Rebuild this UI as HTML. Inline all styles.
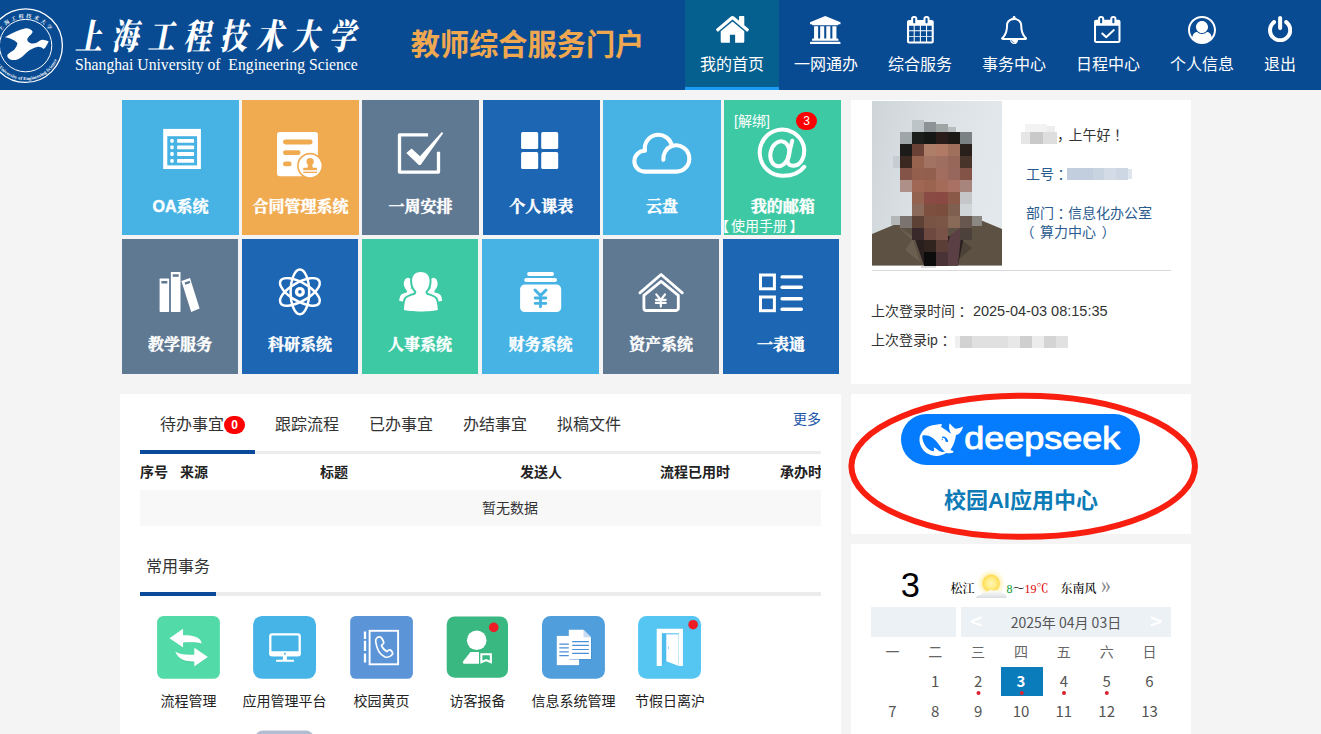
<!DOCTYPE html>
<html lang="zh-CN">
<head>
<meta charset="utf-8">
<title>教师综合服务门户</title>
<style>
*{margin:0;padding:0;box-sizing:border-box}
html,body{width:1321px;height:734px;overflow:hidden}
body{background:#f4f4f4;font-family:"Liberation Sans","Noto Sans CJK SC",sans-serif;font-size:14px;color:#333;position:relative}
.ab{position:absolute;display:block}
.t{position:absolute;white-space:nowrap;line-height:20px}
#hd{position:absolute;left:0;top:0;width:1321px;height:90px;background:#084b93;overflow:hidden}
.nav{position:absolute;top:0;height:90px;width:94px}
.nav.on{background:#06608f;border-bottom:3px solid #1b9cf2}
.nav span{position:absolute;left:0;right:0;top:54px;line-height:22px;font-size:16px;color:#fff;text-align:center}
.tile{position:absolute;color:#fff}
.tile .lb{position:absolute;left:0;right:0;text-align:center;font-family:"Liberation Sans","Noto Serif CJK SC",serif;font-weight:700;-webkit-text-stroke:.45px #fff;font-size:16px;line-height:20px;white-space:nowrap}
.r1{top:100px;height:134.67px;width:117.4px}
.r2{top:239.2px;height:134.5px;width:116px}
.r1 .lb{top:96.500px}
.r2 .lb{top:96px}
.c-lb{background:#47b3e4}.c-or{background:#f0aa50}.c-sl{background:#5f7993}.c-db{background:#1c66b4}.c-gr{background:#3ec9a5}
.panel{position:absolute;background:#fff}
.badge{position:absolute;background:#f00;color:#fff;border-radius:10px;width:21px;height:18px;font-size:12px;line-height:18px;text-align:center}
.tab{font-size:16px;line-height:22px;color:#333}
.th{font-size:14px;font-weight:bold;line-height:20px;color:#222}
.sv{width:63px;height:63px;border-radius:9px}
.sl{width:100px;text-align:center;font-size:14px;line-height:20px;color:#222}
.wz{font-family:"Liberation Serif","Noto Serif CJK SC",serif;font-size:12px;line-height:18px;color:#000;font-weight:500}
.cn{font-family:"Noto Sans CJK SC","Liberation Sans",sans-serif}
.cal .cr{display:flex;height:30px}
.cal .cr i{font-style:normal;display:block;width:42.857px;text-align:center;line-height:30px;font-size:15px;color:#555;font-family:"Noto Sans CJK SC","Liberation Sans",sans-serif}
.cal .wk i{font-size:14px;color:#666}
.p{position:relative;left:3.500px}

</style>
</head>
<body>
<div id="hd">
<svg class="ab" style="left:-14px;top:6px" width="80" height="80" viewBox="-14 6 80 80">
<defs>
<path id="arcT" d="M -3.6 45.6 A 29.3 29.3 0 0 1 54.9 45.6"/>
<path id="arcB" d="M -8.9 45.6 A 34.5 34.5 0 0 0 60.1 45.6"/>
</defs>
<circle cx="25.6" cy="45.6" r="36.8" fill="none" stroke="#fff" stroke-width="1.3"/>
<circle cx="25.6" cy="45.6" r="26.2" fill="none" stroke="#fff" stroke-width="1"/>
<path fill="#fff" d="M4.9 37.2 C12 33 19 29.5 25 28.4 C28.5 28 31.5 29.5 32.7 31.7 C31.5 35 27.5 36.5 27.2 39.9 C28.5 43.5 33 44 36 43.1 C39 41.5 41 39.5 43.6 39.9 C45.5 40 47.5 40.5 48.7 41.5 C47 44.5 46 47.5 43.6 49.1 C41.5 47.5 39.5 46.5 37.1 47 C33.5 48 30 49.5 27.2 51.9 C24 55 21 58 17.4 59.5 C14 60.5 10.5 60 8.7 58.4 C7 57 7 55.8 7.6 54.6 C9.5 52.5 12 51.5 14.2 49.7 C16 47.8 17.2 45.5 17.4 43.1 C14.5 39.5 9.5 38 4.9 37.2Z"/>
<text font-family="'Liberation Serif','Noto Serif CJK SC',serif" font-size="5.2" font-weight="bold" fill="#fff" letter-spacing="2.2"><textPath href="#arcT" startOffset="17%">上海工程技术大学</textPath></text>
<text font-family="'Liberation Serif',serif" font-size="4.6" font-weight="bold" fill="#fff" letter-spacing="0.1"><textPath href="#arcB" startOffset="3%">Shanghai University of Engineering Science</textPath></text>
</svg>
<div class="t" id="cnname" style="left:75px;top:14.900px;transform:scale(1,1.3);transform-origin:50% 50%;font-family:'Liberation Serif','Noto Serif CJK SC',serif;font-weight:900;font-style:italic;font-size:27px;line-height:44px;letter-spacing:9.200px;color:#fff">上海工程技术大学</div>
<div class="t" id="enname" style="left:75px;top:53.600px;font-family:'Liberation Serif',serif;font-size:15.700px;line-height:22px;color:#fff">Shanghai University of&nbsp; Engineering Science</div>
<div class="t" id="portal" style="left:410.800px;top:25.300px;font-weight:bold;font-size:29.200px;line-height:40px;color:#f0a850">教师综合服务门户</div>

<div class="nav on" style="left:685px"><span>我的首页</span></div>
<div class="nav" style="left:779px"><span>一网通办</span></div>
<div class="nav" style="left:873px"><span>综合服务</span></div>
<div class="nav" style="left:967px"><span>事务中心</span></div>
<div class="nav" style="left:1061px"><span>日程中心</span></div>
<div class="nav" style="left:1155px"><span>个人信息</span></div>
<div class="nav" style="left:1249px;width:62px"><span>退出</span></div>
<svg class="ab" style="left:715.75px;top:16.25px" width="33" height="26.75" viewBox="0 0 1612 1283" preserveAspectRatio="none"><path fill="#fff" d="M1382.1 739.2C1382.1 737.2 1382.1 735.2 1381.1 733.2L806.1 259.2L231.1 733.2C231.1 735.2 230.1 737.2 230.1 739.2V1219.2C230.1 1254.2 259.1 1283.2 294.1 1283.2H678.1V899.2H934.1V1283.2H1318.1C1353.1 1283.2 1382.1 1254.2 1382.1 1219.2ZM1605.1 670.2C1616.1 657.2 1614.1 636.2 1601.1 625.2L1382.1 443.2V35.2C1382.1 17.2 1368.1 3.2 1350.1 3.2H1158.1C1140.1 3.2 1126.1 17.2 1126.1 35.2V230.2L882.1 26.2C840.1 -8.8 772.1 -8.8 730.1 26.2L11.1 625.2C-1.9 636.2 -3.9 657.2 7.1 670.2L69.1 744.2C74.1 750.2 82.1 754.2 90.1 755.2C99.1 756.2 107.1 753.2 114.1 748.2L806.1 171.2L1498.1 748.2C1504.1 753.2 1511.1 755.2 1519.1 755.2C1520.1 755.2 1521.1 755.2 1522.1 755.2C1530.1 754.2 1538.1 750.2 1543.1 744.2L1605.1 670.2Z"/></svg>
<svg class="ab" style="left:810px;top:15.5px" width="30.5" height="28.75" viewBox="0 0 1920 1792" preserveAspectRatio="none"><path fill="#fff" d="M960 0 0 384V512H128C128 547 159 576 197 576H1723C1761 576 1792 547 1792 512H1920V384ZM256 640V1408H197C159 1408 128 1437 128 1472V1536H1792V1472C1792 1437 1761 1408 1723 1408H1664V640H1408V1408H1280V640H1024V1408H896V640H640V1408H512V640ZM1851 1600H69C31 1600 0 1629 0 1664V1792H1920V1664C1920 1629 1889 1600 1851 1600Z"/></svg>
<svg class="ab" style="left:907px;top:16.25px" width="26.75" height="27.5" viewBox="0 0 1664 1792" preserveAspectRatio="none"><path fill="#fff" d="M128 1664V1376H416V1664ZM480 1664V1376H800V1664ZM128 1312V992H416V1312ZM480 1312V992H800V1312ZM128 928V640H416V928ZM864 1664V1376H1184V1664ZM480 928V640H800V928ZM1248 1664V1376H1536V1664ZM864 1312V992H1184V1312ZM512 448C512 465 497 480 480 480H416C399 480 384 465 384 448V160C384 143 399 128 416 128H480C497 128 512 143 512 160V448ZM1248 1312V992H1536V1312ZM864 928V640H1184V928ZM1248 928V640H1536V928ZM1280 448C1280 465 1265 480 1248 480H1184C1167 480 1152 465 1152 448V160C1152 143 1167 128 1184 128H1248C1265 128 1280 143 1280 160V448ZM1664 384C1664 314 1606 256 1536 256H1408V160C1408 72 1336 0 1248 0H1184C1096 0 1024 72 1024 160V256H640V160C640 72 568 0 480 0H416C328 0 256 72 256 160V256H128C58 256 0 314 0 384V1664C0 1734 58 1792 128 1792H1536C1606 1792 1664 1734 1664 1664Z"/></svg>
<svg class="ab" style="left:1001px;top:15.75px" width="26.25" height="28" viewBox="0 0 1664 1792" preserveAspectRatio="none"><path fill="#fff" d="M848 1696C848 1705 841 1712 832 1712C735 1712 656 1633 656 1536C656 1527 663 1520 672 1520C681 1520 688 1527 688 1536C688 1615 753 1680 832 1680C841 1680 848 1687 848 1696ZM182 1408C361 1206 448 932 448 576C448 447 570 256 832 256C1094 256 1216 447 1216 576C1216 932 1303 1206 1482 1408ZM1664 1408C1516 1283 1344 1059 1344 576C1344 384 1185 174 920 135C925 123 928 110 928 96C928 43 885 0 832 0C779 0 736 43 736 96C736 110 739 123 744 135C479 174 320 384 320 576C320 1059 148 1283 0 1408C0 1478 58 1536 128 1536H576C576 1677 691 1792 832 1792C973 1792 1088 1677 1088 1536H1536C1606 1536 1664 1478 1664 1408Z"/></svg>
<svg class="ab" style="left:1094px;top:16.25px" width="26.5" height="27" viewBox="0 0 1664 1792" preserveAspectRatio="none"><path fill="#fff" d="M1303 964C1315 951 1315 931 1303 919L1257 873C1245 861 1225 861 1212 873L768 1317L548 1097C535 1085 515 1085 503 1097L457 1143C445 1155 445 1175 457 1188L745 1476C758 1488 778 1488 791 1476L1303 964ZM128 1664V640H1536V1664ZM512 448C512 466 498 480 480 480H416C398 480 384 466 384 448V160C384 142 398 128 416 128H480C498 128 512 142 512 160V448ZM1280 448C1280 466 1266 480 1248 480H1184C1166 480 1152 466 1152 448V160C1152 142 1166 128 1184 128H1248C1266 128 1280 142 1280 160V448ZM1664 384C1664 314 1606 256 1536 256H1408V160C1408 72 1336 0 1248 0H1184C1096 0 1024 72 1024 160V256H640V160C640 72 568 0 480 0H416C328 0 256 72 256 160V256H128C58 256 0 314 0 384V1664C0 1734 58 1792 128 1792H1536C1606 1792 1664 1734 1664 1664Z"/></svg>
<svg class="ab" style="left:1188px;top:15.75px" width="28" height="28" viewBox="0 0 1792 1792" preserveAspectRatio="none"><path fill="#fff" d="M896 0C401 0 0 401 0 896C0 1389 400 1792 896 1792C1393 1792 1792 1388 1792 896C1792 401 1391 0 896 0ZM1515 1351C1479 1172 1392 1024 1209 1024C1128 1103 1018 1152 896 1152C774 1152 664 1103 583 1024C400 1024 313 1172 277 1351C184 1223 128 1066 128 896C128 473 473 128 896 128C1319 128 1664 473 1664 896C1664 1066 1608 1223 1515 1351ZM1280 704C1280 916 1108 1088 896 1088C684 1088 512 916 512 704C512 492 684 320 896 320C1108 320 1280 492 1280 704Z"/></svg>
<svg class="ab" style="left:1268px;top:15.75px" width="24.25" height="26.25" viewBox="0 0 1536 1664" preserveAspectRatio="none"><path fill="#fff" d="M1536 896C1536 653 1424 429 1229 283C1173 240 1092 251 1050 308C1007 364 1019 445 1075 487C1205 585 1280 734 1280 896C1280 1178 1050 1408 768 1408C486 1408 256 1178 256 896C256 734 331 585 461 487C517 445 529 364 486 308C444 251 364 240 307 283C112 429 0 653 0 896C0 1319 345 1664 768 1664C1191 1664 1536 1319 1536 896ZM896 128C896 58 838 0 768 0C698 0 640 58 640 128V768C640 838 698 896 768 896C838 896 896 838 896 768Z"/></svg>
</div>

<div class="tile r1 c-lb" style="left:122px;width:117.200px"><div class="lb">OA系统</div></div>
<div class="tile r1 c-or" style="left:242px;width:116.800px"><div class="lb">合同管理系统</div></div>
<div class="tile r1 c-sl" style="left:362px;width:117px"><div class="lb">一周安排</div></div>
<div class="tile r1 c-db" style="left:483px;width:116.700px"><div class="lb">个人课表</div></div>
<div class="tile r1 c-lb" style="left:603.300px;width:117.500px"><div class="lb">云盘</div></div>
<div class="tile r1 c-gr" style="left:724.100px;width:117.100px"><div class="lb">我的邮箱</div></div>
<div class="tile r2 c-sl" style="left:122px"><div class="lb">教学服务</div></div>
<div class="tile r2 c-db" style="left:242px;width:115.800px"><div class="lb">科研系统</div></div>
<div class="tile r2 c-gr" style="left:362px"><div class="lb">人事系统</div></div>
<div class="tile r2 c-lb" style="left:482.400px;width:116.400px"><div class="lb">财务系统</div></div>
<div class="tile r2 c-sl" style="left:603.200px;width:115.800px"><div class="lb">资产系统</div></div>
<div class="tile r2 c-db" style="left:723px"><div class="lb">一表通</div></div>

<svg class="ab" id="ticons" style="left:0;top:0" width="1321" height="734" viewBox="0 0 1321 734">
<!-- OA list -->
<g fill="#fff">
<rect x="163.2" y="128.9" width="37.7" height="40.1"/>
<rect x="167.3" y="136.2" width="29.8" height="29.2" fill="#47b3e4"/>
<rect x="170.3" y="138.9" width="3.4" height="3.900" rx="1.200"/><rect x="177.1" y="138.9" width="17" height="3.900" rx=".900"/>
<rect x="170.3" y="145.4" width="3.4" height="3.900" rx="1.200"/><rect x="177.1" y="145.4" width="17" height="3.900" rx=".900"/>
<rect x="170.3" y="152.1" width="3.4" height="3.900" rx="1.200"/><rect x="177.1" y="152.1" width="17" height="3.900" rx=".900"/>
<rect x="170.3" y="158.900" width="3.400" height="3.900" rx="1.200"/><rect x="177.1" y="158.900" width="17" height="3.900" rx=".900"/>
</g>
<!-- contract -->
<g>
<rect x="277" y="132" width="40.9" height="44.3" rx="2.8" fill="#fff"/>
<rect x="283" y="139.600" width="29.600" height="4.800" rx="2.400" fill="#f0aa50"/>
<rect x="283" y="150.300" width="17.500" height="4.700" rx="2.35" fill="#f0aa50"/>
<rect x="283" y="161.6" width="8.6" height="4.7" rx="2.35" fill="#f0aa50"/>
<circle cx="310.100" cy="165.800" r="13" fill="#f0aa50"/>
<circle cx="310.100" cy="165.800" r="11.400" fill="#fff"/>
<g fill="#f0aa50"><circle cx="310.100" cy="161.700" r="3.600"/><path d="M308.400 163.500h3.400l1 4.200h4.200v2.300h-13.800v-2.300h4.200z"/><rect x="303.300" y="170.600" width="13.800" height=".8" opacity=".55"/><rect x="303.300" y="171.900" width="13.800" height="1.100"/></g>
</g>
<!-- check square -->
<g fill="none" stroke="#fff">
<path d="M428.100 134.800H399.500V172.100H438.500V151.800" stroke-width="3.300" stroke-linejoin="round"/>
</g>
<path fill="#fff" d="M406.3 153 411.6 148.6 420 156.3 441.8 132 443.2 133.2 420.6 165 418.8 165Z"/>
<!-- th-large -->
<g fill="#fff"><rect x="521.1" y="132.1" width="17.1" height="17" rx="1.6"/><rect x="541.2" y="132.1" width="17" height="17" rx="1.6"/><rect x="521.1" y="152.1" width="17.1" height="17" rx="1.6"/><rect x="541.2" y="152.1" width="17" height="17" rx="1.6"/></g>
<!-- cloud -->
<g fill="none" stroke="#fff" stroke-width="4.100" stroke-linecap="round" stroke-linejoin="round">
<path d="M644.500 171.600A10.400 10.400 0 0 1 645 150.800A13.600 13.600 0 0 1 671.800 146A13.300 13.300 0 0 1 689.300 158.700A12.900 12.900 0 0 1 676.400 171.600Z"/>
<path d="M663.400 159.800A13.300 13.300 0 0 1 671.800 146"/>
</g>
<!-- books -->
<g fill="#fff">
<rect x="159.6" y="278.6" width="9.5" height="33.3" rx=".6"/><rect x="161.4" y="281" width="5.9" height="2.5" fill="#5f7993"/>
<rect x="170.9" y="271.9" width="9.6" height="40" rx=".6"/><rect x="172.7" y="274.3" width="6" height="2.5" fill="#5f7993"/>
<path d="M181.4 281 190 278 199.6 308.6 191.2 311.9Z"/><path d="M184.6 282.6 189.6 280.8 190.3 283 185.3 284.8Z" fill="#5f7993"/>
</g>
<!-- atom -->
<g fill="none" stroke="#fff" stroke-width="2.5">
<ellipse cx="299.9" cy="291.9" rx="9.300" ry="22.300"/>
<ellipse cx="299.9" cy="291.9" rx="9.300" ry="22.300" transform="rotate(60 299.9 291.9)"/>
<ellipse cx="299.9" cy="291.9" rx="9.300" ry="22.300" transform="rotate(-60 299.9 291.9)"/>
<circle cx="299.9" cy="291.9" r="3.4" stroke-width="3.2"/>
</g>
<!-- people -->
<g transform="translate(390 265) scale(.0749)">
<g fill="#fff">
<ellipse cx="240" cy="250" rx="56" ry="80"/>
<path d="M200 300C215 335 240 350 222 368C190 380 158 384 145 402C130 430 125 460 122 476L176 492L410 480V330Z"/>
<ellipse cx="580" cy="250" rx="56" ry="80"/>
<path d="M620 300C605 335 580 350 598 368C630 380 662 384 675 402C690 430 695 460 698 476L644 492L410 480V330Z"/>
</g>
<path fill="#fff" stroke="#3ec9a5" stroke-width="54" paint-order="stroke" stroke-linejoin="round" d="M410 95C340 95 295 140 295 210C295 270 315 320 350 350C355 375 345 392 320 400C270 415 225 430 210 455C195 490 188 560 185 598C250 628 570 628 640 598C635 560 628 490 612 455C598 430 550 415 505 400C478 392 470 375 478 350C510 320 528 270 528 210C528 140 480 95 410 95Z"/>
</g>
<!-- money jar -->
<g fill="#fff">
<rect x="527.100" y="272.100" width="26.900" height="3.800" rx="1.900"/>
<rect x="524.200" y="278.100" width="32.800" height="4" rx="2"/>
<rect x="520.100" y="284.600" width="41.100" height="27.400" rx="4.600"/>
</g>
<g fill="none" stroke="#47b3e4" stroke-width="2.900" stroke-linecap="round"><path d="M535 290 540.500 295.600 546 290M540.500 295.600V306.800M535.200 298H545.800M535.200 303.400H545.800"/></g>
<!-- house -->
<g fill="none" stroke="#fff" stroke-width="2.850" stroke-linecap="round" stroke-linejoin="round">
<path d="M639.900 292.800 661.100 274.500 682.300 292.800"/>
<path d="M643.900 295.400 661.100 281.400 678.300 295.400V308.300a2.200 2.200 0 0 1-2.200 2.200H646.100a2.200 2.200 0 0 1-2.200-2.200Z"/>
</g>
<g fill="none" stroke="#fff" stroke-width="2.200" stroke-linecap="round"><path d="M656.300 294.400 660.800 300 665 294.400M660.800 300V306.600M655.900 299.800H665.700M655.900 302.900H665.700"/></g>
<!-- list -->
<g fill="none" stroke="#fff" stroke-width="3">
<rect x="760.500" y="275" width="13.900" height="13.800"/>
<rect x="760.500" y="297" width="13.900" height="13.700"/>
</g>
<g fill="#fff"><rect x="780.400" y="275.200" width="22.600" height="3.400" rx="1.700"/><rect x="780.400" y="285.600" width="22.600" height="3.400" rx="1.700"/><rect x="780.400" y="297.000" width="22.600" height="3.400" rx="1.700"/><rect x="780.400" y="307.500" width="22.600" height="3.400" rx="1.700"/></g>
</svg>

<svg class="ab" id="at" style="left:750px;top:120px" width="64" height="64" viewBox="750 120 64 64">
<g transform="translate(620 100) scale(.19073)" fill="none" stroke="#fff" stroke-width="21" stroke-linecap="round" stroke-linejoin="round">
<path d="M966 350C935 392 890 398 850 397A118 121 0 1 1 962 236C975 290 952 343 910 345C886 346 874 330 880 305L903 214"/>
<ellipse cx="838" cy="282" rx="49" ry="66" transform="rotate(14 838 282)"/>
</g>
</svg>
<div class="t" style="left:734px;top:110.500px;font-size:14px;font-weight:400;color:#fff;font-family:'Liberation Sans','Noto Sans CJK SC',sans-serif">[解绑]</div>
<div class="badge" style="left:796px;top:111.500px">3</div>
<div class="t" style="left:717px;top:215.500px;font-size:14px;font-weight:400;color:#fff"><span style="position:relative;left:-2px">【</span>使用手册<span style="position:relative;left:2.500px">】</span></div>

<div class="panel" style="left:120px;top:394px;width:721.3px;height:340px"></div>
<div class="ab" style="left:140px;top:450.5px;width:681px;height:3.3px;background:#ececec"></div>
<div class="ab" style="left:140px;top:450px;width:115px;height:4px;background:#0b4a9b"></div>
<div class="t tab" style="left:160px;top:413.500px">待办事宜</div>
<div class="badge" style="left:224.200px;top:416px;font-weight:bold">0</div>
<div class="t tab" style="left:275px;top:413.500px">跟踪流程</div>
<div class="t tab" style="left:369px;top:413.500px">已办事宜</div>
<div class="t tab" style="left:463px;top:413.500px">办结事宜</div>
<div class="t tab" style="left:557px;top:413.500px">拟稿文件</div>
<div class="t" style="left:793px;top:409px;color:#1b55a8;font-size:14px">更多</div>
<div class="ab" style="left:140px;top:454px;width:681px;height:80px;overflow:hidden">
 <div class="t th" style="left:0;top:8px">序号</div>
 <div class="t th" style="left:40px;top:8px">来源</div>
 <div class="t th" style="left:180px;top:8px">标题</div>
 <div class="t th" style="left:380px;top:8px">发送人</div>
 <div class="t th" style="left:520px;top:8px">流程已用时</div>
 <div class="t th" style="left:640px;top:8px">承办时限</div>
 <div class="ab" style="left:0;top:36px;width:740px;height:36.300px;background:#f8f8f8;text-align:center;line-height:36px;font-size:14px;color:#333">暂无数据</div>
</div>
<div class="t" style="left:146px;top:555.500px;font-size:16px;line-height:22px;color:#333">常用事务</div>
<div class="ab" style="left:140px;top:592.300px;width:681px;height:3.400px;background:#ececec"></div>
<div class="ab" style="left:140px;top:592px;width:76px;height:4px;background:#0b4a9b"></div>

<div class="t sl" style="left:138.500px;top:691px">流程管理</div>
<div class="t sl" style="left:234.600px;top:691px">应用管理平台</div>
<div class="t sl" style="left:331.500px;top:691px">校园黄页</div>
<div class="t sl" style="left:427.600px;top:691px">访客报备</div>
<div class="t sl" style="left:523.500px;top:691px">信息系统管理</div>
<div class="t sl" style="left:620px;top:691px">节假日离沪</div>

<svg class="ab" id="svc" style="left:150px;top:610px" width="560" height="124" viewBox="150 610 560 124">
<!-- bg squares -->
<rect x="157.100" y="615.900" width="62.800" height="62.900" rx="6.500" fill="#52dba8"/>
<rect x="253.100" y="615.900" width="62.900" height="62.900" rx="9" fill="#46b4e6"/>
<rect x="350.200" y="615.900" width="62.700" height="62.900" rx="5.500" fill="#5c94d8"/>
<rect x="446.700" y="616.500" width="61.300" height="61.200" rx="8" fill="#3ab882"/>
<rect x="542" y="615.900" width="62.900" height="62.900" rx="8.500" fill="#509edb"/>
<rect x="638.100" y="615.900" width="62.900" height="62.900" rx="8.500" fill="#55c6f1"/>
<rect x="255" y="730.500" width="58.800" height="20" rx="8" fill="#b3bdd2"/>
<!-- 1 arrows -->
<g transform="translate(150 610) scale(.13626)">
<path d="M243 142 146 208 243 274 243 240C300 236 350 238 382 248C372 205 330 186 243 186Z" fill="#3fc792" opacity=".55" transform="translate(3 5)"/>
<path d="M322 282 422 347 322 414 322 380C265 382 210 370 186 308C215 328 262 334 322 330Z" fill="#3fc792" opacity=".55" transform="translate(3 5)"/>
<path d="M243 137 143 208 243 275 243 238C300 234 350 236 380 246C372 203 330 184 243 185Z" fill="#fff"/>
<path d="M325 277 425 345 325 415 325 378C268 380 210 368 185 305C215 326 262 332 325 328Z" fill="#fff"/>
</g>
<!-- 2 monitor -->
<g>
<rect x="270.300" y="634.300" width="29.400" height="20.800" rx="1.800" fill="none" stroke="#fff" stroke-width="2.300"/>
<rect x="269.400" y="651.200" width="31.200" height="5" rx="1.600" fill="#fff"/>
<circle cx="284.900" cy="653.800" r="1" fill="#46b4e6"/>
<rect x="282.900" y="656" width="4" height="4.200" fill="#fff"/>
<rect x="276" y="659.700" width="18" height="2.100" rx=".6" fill="#fff"/>
</g>
<!-- 3 phone book -->
<g fill="none" stroke="#fff">
<rect x="369.600" y="630.800" width="28.500" height="33.500" stroke-width="1.900"/>
<path d="M365 631.400V639M365 640.700V650.900M365 653.600V662.500" stroke-width="2.300"/>
<path transform="translate(340 610) scale(.13626)" stroke-width="12" stroke-linejoin="round" d="M262 232C258 205 282 192 300 200C312 210 318 228 322 240C318 250 308 254 304 260C312 280 326 296 345 305C352 300 358 292 368 292C380 300 388 312 386 325C372 342 350 350 330 345C295 330 270 290 262 232Z"/>
</g>
<!-- 4 visitor -->
<g fill="#fff">
<circle cx="476.700" cy="640.200" r="9.800"/>
<path d="M470.500 652H479V663.800H465.200Q462 663.800 463.200 661.200Z"/>
<path fill-rule="evenodd" d="M480.300 653.300H491.900V663.800L486.100 661.200 480.300 663.800ZM482.400 655.300V660.600L486.100 658.900 489.800 660.600V655.300Z"/>
</g>
<circle cx="493.700" cy="627.400" r="4.800" fill="#ee1c25"/>
<!-- 5 docs -->
<g>
<rect x="557.400" y="636.600" width="22.300" height="29.300" fill="#3f86d2" opacity=".6"/>
<rect x="556.800" y="635.900" width="22.300" height="29.300" fill="#fff"/>
<path d="M559.300 644.100h10M559.300 647.900h10M559.300 651.800h10M559.300 655.600h10" stroke="#4a8fd8" stroke-width="1.200"/>
<path d="M569.400 630.500H584.200L591.700 638V659.800H569.400Z" fill="#3f86d2" opacity=".6"/>
<path d="M568.800 629.800H583.500L591 637.300V659.100H568.800Z" fill="#fff"/>
<path d="M583.500 629.800V637.300H591Z" fill="#c9dcf3"/>
<path d="M572.200 641.600h16.700M572.200 645.400h16.700M572.200 649.500h16.700M572.200 653.300h16.700" stroke="#4a8fd8" stroke-width="1.200"/>
</g>
<!-- 6 door -->
<g>
<path d="M656.700 628.700H682.900V666.100H678.800V633.200H661.900V666.100H656.700Z" fill="#fff"/>
<path d="M661.900 633.200H666.300V660.500L661.900 666.100Z" fill="#49b7ea" opacity=".55"/>
<path d="M666.300 634.200H678.800V666.100L666.300 661.300Z" fill="#fff"/>
<path d="M666.600 634.500H678.500V665.600" fill="none" stroke="#a8dcf6" stroke-width=".5"/>
<rect x="668" y="646.500" width=".9" height="2.600" fill="#8fd0f2"/>
</g>
<circle cx="693.100" cy="624.700" r="4.800" fill="#ee1c25"/>
</svg>

<div class="panel" style="left:851px;top:100px;width:340px;height:283.800px"></div>
<svg class="ab" style="left:872px;top:101px" width="130" height="168" viewBox="872 101 130 168" shape-rendering="crispEdges">
<defs><linearGradient id="pbg" x1="0" y1="0" x2="1" y2=".25"><stop offset="0" stop-color="#ced5d9"/><stop offset=".45" stop-color="#dae0e3"/><stop offset="1" stop-color="#e2e8eb"/></linearGradient></defs>
<rect x="872" y="101" width="130" height="164.500" fill="url(#pbg)"/>
<!-- jacket -->
<path d="M872 234 896 224 912 222 960 222 978 219 1002 229V265.500H872Z" fill="#5d5144" shape-rendering="auto"/>
<path d="M897 226 912 240 905 250 920 262 912 236Z" fill="#6b5f51" shape-rendering="auto"/>
<path d="M975 221 962 240 972 248 956 262 962 232Z" fill="#4d4238" shape-rendering="auto"/>
<path d="M914 236 924 265.500H958L966 226 950 236Z" fill="#2a1f1f" shape-rendering="auto"/>
<path d="M946 250 950 236 962 226 958 265.500H944Z" fill="#5a3f44" shape-rendering="auto"/>
<!-- mosaic -->
<g>
<rect x="912" y="120" width="12" height="12" fill="#bcc4c7"/><rect x="924" y="122" width="12" height="10" fill="#8d9394"/><rect x="936" y="124" width="12" height="8" fill="#9fa4a4"/><rect x="948" y="127" width="8" height="5" fill="#b7bcbd"/>
<rect x="900" y="132" width="12" height="12" fill="#9fa6a8"/><rect x="912" y="132" width="12" height="12" fill="#1b1e1b"/><rect x="924" y="132" width="12" height="12" fill="#151715"/><rect x="936" y="132" width="12" height="12" fill="#2a1c18"/><rect x="948" y="132" width="12" height="12" fill="#1d1a16"/><rect x="960" y="132" width="12" height="12" fill="#7a8182"/>
<rect x="900" y="144" width="12" height="12" fill="#1d1b19"/><rect x="912" y="144" width="12" height="12" fill="#6a4135"/><rect x="924" y="144" width="12" height="12" fill="#ae7e68"/><rect x="936" y="144" width="12" height="12" fill="#b07a64"/><rect x="948" y="144" width="12" height="12" fill="#a0705c"/><rect x="960" y="144" width="12" height="12" fill="#291f1b"/>
<rect x="893" y="156" width="7" height="12" fill="#c6ccd2"/>
<rect x="900" y="156" width="12" height="12" fill="#3b2921"/><rect x="912" y="156" width="12" height="12" fill="#98634e"/><rect x="924" y="156" width="12" height="12" fill="#a27262"/><rect x="936" y="156" width="12" height="12" fill="#9e6e60"/><rect x="948" y="156" width="12" height="12" fill="#97675a"/><rect x="960" y="156" width="12" height="12" fill="#49342a"/>
<rect x="900" y="168" width="12" height="12" fill="#835447"/><rect x="912" y="168" width="12" height="12" fill="#955f4e"/><rect x="924" y="168" width="12" height="12" fill="#925f4e"/><rect x="936" y="168" width="12" height="12" fill="#a26d5f"/><rect x="948" y="168" width="12" height="12" fill="#97675d"/><rect x="960" y="168" width="12" height="12" fill="#825346"/>
<rect x="900" y="180" width="12" height="12" fill="#af9088"/><rect x="912" y="180" width="12" height="12" fill="#a16755"/><rect x="924" y="180" width="12" height="12" fill="#9b6451"/><rect x="936" y="180" width="12" height="12" fill="#a46b59"/><rect x="948" y="180" width="12" height="12" fill="#a97163"/><rect x="960" y="180" width="12" height="12" fill="#a7857c"/>
<rect x="912" y="192" width="12" height="12" fill="#93634f"/><rect x="924" y="192" width="12" height="12" fill="#894b43"/><rect x="936" y="192" width="12" height="12" fill="#8b4943"/><rect x="948" y="192" width="12" height="12" fill="#8b5947"/><rect x="960" y="192" width="12" height="12" fill="#c5c6c7"/>
<rect x="912" y="204" width="12" height="12" fill="#8b695b"/><rect x="924" y="204" width="12" height="12" fill="#7d4f3f"/><rect x="936" y="204" width="12" height="12" fill="#7b4d3d"/><rect x="948" y="204" width="12" height="12" fill="#7f5f4f"/><rect x="960" y="204" width="12" height="12" fill="#d0d5d7"/>
<rect x="891" y="216" width="9" height="9" fill="#b3b7b7"/><rect x="900" y="216" width="12" height="12" fill="#7b736f"/><rect x="912" y="216" width="12" height="12" fill="#5d4135"/><rect x="924" y="216" width="12" height="12" fill="#795343"/><rect x="936" y="216" width="12" height="12" fill="#7b5545"/><rect x="948" y="216" width="12" height="12" fill="#896957"/><rect x="960" y="216" width="12" height="12" fill="#67574f"/><rect x="972" y="216" width="10" height="10" fill="#8b8783"/>
<rect x="912" y="228" width="12" height="12" fill="#39292a"/><rect x="924" y="228" width="12" height="12" fill="#6d493f"/><rect x="936" y="228" width="12" height="12" fill="#795347"/><rect x="960" y="228" width="12" height="12" fill="#4d413b"/>
<rect x="924" y="240" width="12" height="12" fill="#31231e"/><rect x="936" y="240" width="12" height="12" fill="#5b3f37"/>
<rect x="924" y="252" width="12" height="13.500" fill="#0c0c0c"/><rect x="936" y="252" width="12" height="13.500" fill="#493337"/>
</g>
<rect x="921" y="265.500" width="15" height="2.500" fill="#dcdcdc"/>
</svg>
<div class="ab" style="left:872px;top:269.500px;width:299px;height:1px;background:#d9d9d9"></div>
<svg class="ab" style="left:1020px;top:122px" width="40" height="24" viewBox="1020 122 40 24" shape-rendering="crispEdges">
<rect x="1025" y="124" width="22" height="8" fill="#f3f3f3"/><rect x="1020.800" y="132" width="9" height="12" fill="#e6e6e6"/><rect x="1030" y="132" width="13" height="12" fill="#c9c9c9"/><rect x="1043" y="132" width="13.500" height="12" fill="#dedede"/><rect x="1047" y="126" width="8" height="6" fill="#ededed"/>
</svg>
<div class="t" style="left:1057px;top:125px;font-size:14px;color:#333"><span style="letter-spacing:-2.400px">，</span>上午好<span class="p">！</span></div>
<div class="t" style="left:1026px;top:164px;font-size:14px;color:#2a5a8e">工号<span class="p">：</span></div>
<svg class="ab" style="left:1067px;top:168px" width="66" height="12" viewBox="0 0 66 12" shape-rendering="crispEdges"><rect x=".4" y="0" width="26" height="11.700" fill="#c2cedd"/><rect x="26" y="0" width="11" height="11.700" fill="#c9d4e1"/><rect x="37" y="0" width="12" height="11.700" fill="#d3dbe6"/><rect x="49" y="0" width="12" height="11.700" fill="#cdd7e3"/><rect x="61" y="1" width="3.500" height="10" fill="#dfe5ee"/></svg>
<div class="t" style="left:1026px;top:204px;font-size:14px;line-height:19.200px;color:#2a5a8e">部门<span class="p">：</span>信息化办公室<br><span style="position:relative;left:-5.500px">（</span>算力中心<span style="position:relative;left:5.500px">）</span></div>
<div class="t" style="left:871px;top:301px;font-size:14px;color:#333">上次登录时间<span class="p">：</span> <span style="font-size:14.500px">2025-04-03 08:15:35</span></div>
<div class="t" style="left:871px;top:330px;font-size:14px;color:#333">上次登录ip<span class="p">：</span></div>
<svg class="ab" style="left:955px;top:335px" width="114" height="14" viewBox="0 0 114 14" shape-rendering="crispEdges"><rect x="0" y=".5" width="5" height="12.500" fill="#f0f0f0"/><rect x="5" y=".5" width="12" height="12.500" fill="#d2d2d2"/><rect x="17" y=".5" width="36" height="12.500" fill="#e0e0e0"/><rect x="53" y=".5" width="12" height="12.500" fill="#e8e8e8"/><rect x="65" y=".5" width="12" height="12.500" fill="#cfcfcf"/><rect x="77" y=".5" width="12" height="12.500" fill="#ececec"/><rect x="89" y=".5" width="12" height="12.500" fill="#d4d4d4"/><rect x="101" y=".5" width="12" height="12.500" fill="#e1e1e1"/></svg>

<div class="panel" style="left:851px;top:394px;width:340px;height:139.700px"></div>
<div class="ab" style="left:901px;top:414px;width:239.300px;height:50.800px;border-radius:25.400px;background:#047cfd"></div>
<svg class="ab" style="left:901px;top:410px" width="240" height="60" viewBox="901 410 240 60">
<g transform="translate(905 410) scale(.08326)">
<path fill="#fff" d="M440 168C400 172 340 178 290 195C235 218 192 268 176 325C166 385 184 440 225 490C265 530 320 552 375 552C425 550 465 535 492 515C520 522 560 522 582 508C590 498 575 488 545 480C572 440 598 395 612 300C650 292 682 262 698 195C672 212 640 222 605 226C585 215 560 190 537 160C522 195 528 240 552 284C520 262 470 225 432 200C440 190 445 178 440 168Z"/>
<path fill="#047cfd" d="M208 308C250 298 300 310 345 345C385 380 415 425 440 462C455 482 470 492 482 496C455 512 420 505 392 478C375 462 360 452 345 450C348 468 352 482 350 495C300 492 262 462 238 420C218 385 206 345 208 308Z"/>
<path fill="#047cfd" d="M446 322C470 312 500 330 515 362C522 378 515 388 498 384C488 380 482 370 480 352C476 340 464 334 452 338C446 334 444 328 446 322ZM444 346C450 344 456 350 455 358C452 364 444 362 442 356C441 352 442 348 444 346Z"/>
</g>
<text x="964.200" y="449.300" font-family="'Liberation Sans',sans-serif" font-size="32" fill="#fff" stroke="#fff" stroke-width=".900" stroke-linejoin="round" textLength="156" lengthAdjust="spacingAndGlyphs">deepseek</text>
</svg>
<div class="t" style="left:851px;top:484.700px;width:340px;text-align:center;font-weight:bold;font-size:22px;line-height:32px;color:#0d7bb6">校园AI应用中心</div>

<div class="panel" style="left:851px;top:544px;width:340px;height:190px"></div>
<svg class="ab" style="left:840px;top:385px" width="370" height="165" viewBox="840 385 370 165"><ellipse cx="1023.200" cy="466.300" rx="171.800" ry="70.500" fill="none" stroke="#f81f11" stroke-width="6"/></svg>

<div class="t" style="left:900.700px;top:564.800px;font-size:34.500px;line-height:40px;color:#000">3</div>
<div class="t wz" style="left:950.500px;top:580px">松江</div>
<svg class="ab" style="left:972px;top:568px" width="40" height="34" viewBox="972 568 40 34">
<defs>
<radialGradient id="sung"><stop offset="0" stop-color="#fff6b8"/><stop offset=".5" stop-color="#ffee8a"/><stop offset=".85" stop-color="#ffe062"/><stop offset="1" stop-color="#ffd84e"/></radialGradient>
<radialGradient id="glow"><stop offset=".5" stop-color="#ffe784" stop-opacity=".75"/><stop offset=".8" stop-color="#fff0a8" stop-opacity=".35"/><stop offset="1" stop-color="#fff6c8" stop-opacity="0"/></radialGradient>
<linearGradient id="cld" x1="0" y1="0" x2="0" y2="1"><stop offset="0" stop-color="#ffffff"/><stop offset="1" stop-color="#dcdfe2"/></linearGradient>
</defs>
<circle cx="991.100" cy="583.400" r="14.500" fill="url(#glow)"/>
<circle cx="991.100" cy="583.400" r="8.800" fill="url(#sung)"/>
<path d="M976.200 597.400c.6-1.800 2.600-2.600 4.400-2.200c1-2.200 3.600-3.200 5.800-2.400c1.400-2.800 5-3.800 7.400-2c1.400-1 3.600-.6 4.400 1c2-.6 4 .2 4.800 1.800c2 .2 3.400 1.600 3.600 3.800z" fill="url(#cld)" opacity=".95"/>
<path d="M976.200 597.400h30.400" stroke="#c9ccd0" stroke-width=".8" opacity=".7"/>
</svg>
<div class="t wz" style="left:1006.500px;top:580px"><span style="color:#0a9a2e">8</span>～<span style="color:#e00000">19℃</span></div>
<div class="t wz" style="left:1060.500px;top:580px">东南风</div>
<div class="t wz" style="left:1100.500px;top:576px;color:#8a8a8a;font-size:19px;transform:scale(1.05,1.3);transform-origin:0 50%">»</div>
<div class="ab" style="left:871.200px;top:607px;width:84.800px;height:29.700px;background:#ecf1f6"></div>
<div class="ab" style="left:960.800px;top:607px;width:210.300px;height:29.700px;background:#ecf1f6"></div>
<div class="t" style="left:966px;top:611px;width:20px;text-align:center;color:#fff;font-size:17px;font-weight:bold;font-family:'DejaVu Sans','Liberation Sans',sans-serif">&lt;</div>
<div class="t" style="left:1146px;top:611px;width:20px;text-align:center;color:#fff;font-size:17px;font-weight:bold;font-family:'DejaVu Sans','Liberation Sans',sans-serif">&gt;</div>
<div class="t cn" style="left:960.800px;top:611.500px;width:210.300px;text-align:center;font-size:14px;color:#555">2025年 04月 03日</div>
<div class="ab" style="left:1001px;top:667.200px;width:42px;height:28.600px;background:#0a7cbc"></div>
<div class="ab cal" style="left:871px;top:636px;width:300px">
<div class="cr wk"><i>一</i><i>二</i><i>三</i><i>四</i><i>五</i><i>六</i><i>日</i></div>
<div class="cr"><i></i><i>1</i><i>2</i><i style="color:#fff;font-weight:bold">3</i><i>4</i><i>5</i><i>6</i></div>
<div class="cr"><i>7</i><i>8</i><i>9</i><i>10</i><i>11</i><i>12</i><i>13</i></div>
</div>
<svg class="ab" style="left:970px;top:688px" width="150" height="10" viewBox="970 688 150 10"><g fill="#d9222d"><circle cx="978.500" cy="692.900" r="2"/><circle cx="1021.800" cy="692.900" r="2"/><circle cx="1064" cy="692.900" r="2"/><circle cx="1106.800" cy="692.900" r="2"/></g></svg>

</body>
</html>
